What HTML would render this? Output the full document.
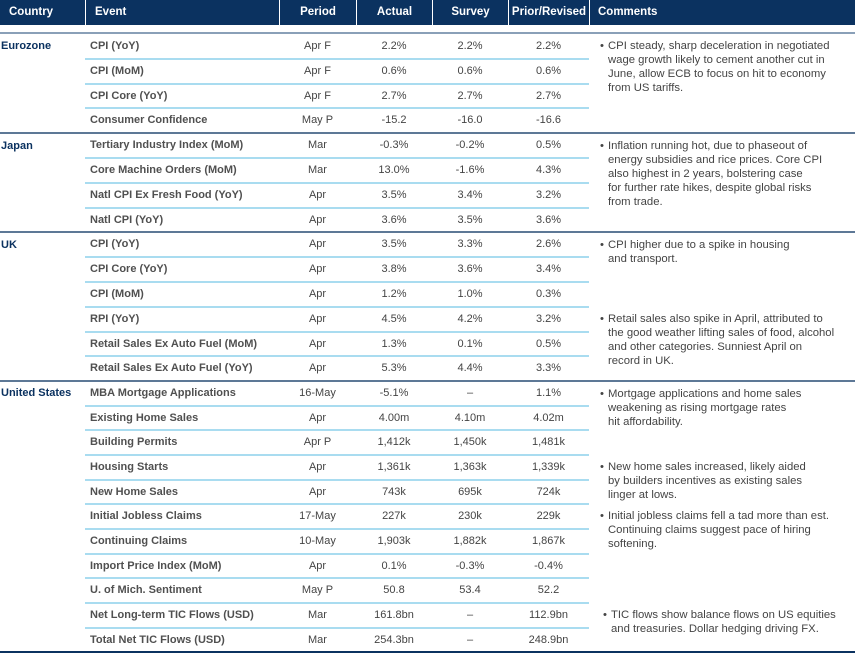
<!DOCTYPE html>
<html><head><meta charset="utf-8"><style>
*{margin:0;padding:0;box-sizing:border-box}
body{width:855px;height:653px;background:#fff;font-family:"Liberation Sans",sans-serif;position:relative;overflow:hidden;color:#444}
.hdr{position:absolute;top:0;left:0;width:855px;height:25px;background:#0b3260;color:#fff;font-weight:bold;font-size:11.5px}
.hdr div{position:absolute;top:0;height:25px;line-height:25px;border-right:1.5px solid #fff}
.row{position:absolute;left:0;width:855px;font-size:11px}
.row span{position:absolute;top:0;line-height:inherit}
.ev{left:90px;font-weight:bold;color:#505050}
.pe{left:279px;width:77px;text-align:center}
.ac{left:356px;width:76px;text-align:center}
.su{left:432px;width:76px;text-align:center}
.pr{left:508px;width:81px;text-align:center}
.ln{position:absolute;left:85px;width:504px;height:2px;background:#a9dcf0}
.gl{position:absolute;left:0;width:855px;height:2px;background:#5d7896}
.cty{position:absolute;left:1px;font-weight:bold;color:#0b3260;font-size:11px}
.cm{position:absolute;left:608px;font-size:11.3px;line-height:14px;color:#444;width:250px;white-space:nowrap}
.cm b{position:absolute;left:-8px;font-weight:normal}
</style></head><body>
<div class="hdr">
<div style="left:0;width:86px;padding-left:9px">Country</div>
<div style="left:86px;width:194px;padding-left:9px">Event</div>
<div style="left:280px;width:77px;text-align:center">Period</div>
<div style="left:357px;width:76px;text-align:center">Actual</div>
<div style="left:433px;width:76px;text-align:center">Survey</div>
<div style="left:509px;width:81px;text-align:center">Prior/Revised</div>
<div style="left:590px;width:265px;padding-left:8px;border:none">Comments</div>
</div>
<div class="gl" style="top:32px;background:#8aa0b8"></div>

<div class="row" style="top:34px;height:24.75px;line-height:24.75px"><span class="ev">CPI (YoY)</span><span class="pe">Apr F</span><span class="ac">2.2%</span><span class="su">2.2%</span><span class="pr">2.2%</span></div>
<div class="ln" style="top:57.5px"></div>
<div class="row" style="top:58.75px;height:24.75px;line-height:24.75px"><span class="ev">CPI (MoM)</span><span class="pe">Apr F</span><span class="ac">0.6%</span><span class="su">0.6%</span><span class="pr">0.6%</span></div>
<div class="ln" style="top:82.5px"></div>
<div class="row" style="top:83.5px;height:24.75px;line-height:24.75px"><span class="ev">CPI Core (YoY)</span><span class="pe">Apr F</span><span class="ac">2.7%</span><span class="su">2.7%</span><span class="pr">2.7%</span></div>
<div class="ln" style="top:107px"></div>
<div class="row" style="top:108.25px;height:24.75px;line-height:24.75px"><span class="ev">Consumer Confidence</span><span class="pe">May P</span><span class="ac">-15.2</span><span class="su">-16.0</span><span class="pr">-16.6</span></div>
<div class="gl" style="top:131.5px"></div>
<div class="cty" style="top:40px">Eurozone</div>
<div class="cm" style="top:39px"><b>•</b>CPI steady, sharp deceleration in negotiated<br>wage growth likely to cement another cut in<br>June, allow ECB to focus on hit to economy<br>from US tariffs.</div>

<div class="row" style="top:133px;height:24.75px;line-height:24.75px"><span class="ev">Tertiary Industry Index (MoM)</span><span class="pe">Mar</span><span class="ac">-0.3%</span><span class="su">-0.2%</span><span class="pr">0.5%</span></div>
<div class="ln" style="top:157px"></div>
<div class="row" style="top:158px;height:24.75px;line-height:24.75px"><span class="ev">Core Machine Orders (MoM)</span><span class="pe">Mar</span><span class="ac">13.0%</span><span class="su">-1.6%</span><span class="pr">4.3%</span></div>
<div class="ln" style="top:182px"></div>
<div class="row" style="top:183px;height:24.75px;line-height:24.75px"><span class="ev">Natl CPI Ex Fresh Food (YoY)</span><span class="pe">Apr</span><span class="ac">3.5%</span><span class="su">3.4%</span><span class="pr">3.2%</span></div>
<div class="ln" style="top:206.5px"></div>
<div class="row" style="top:207.5px;height:24.75px;line-height:24.75px"><span class="ev">Natl CPI (YoY)</span><span class="pe">Apr</span><span class="ac">3.6%</span><span class="su">3.5%</span><span class="pr">3.6%</span></div>
<div class="gl" style="top:230.5px"></div>
<div class="cty" style="top:140px">Japan</div>
<div class="cm" style="top:139px"><b>•</b>Inflation running hot, due to phaseout of<br>energy subsidies and rice prices. Core CPI<br>also highest in 2 years, bolstering case<br>for further rate hikes, despite global risks<br>from trade.</div>

<div class="row" style="top:232px;height:24.8px;line-height:24.8px"><span class="ev">CPI (YoY)</span><span class="pe">Apr</span><span class="ac">3.5%</span><span class="su">3.3%</span><span class="pr">2.6%</span></div>
<div class="ln" style="top:256px"></div>
<div class="row" style="top:257px;height:24.8px;line-height:24.8px"><span class="ev">CPI Core (YoY)</span><span class="pe">Apr</span><span class="ac">3.8%</span><span class="su">3.6%</span><span class="pr">3.4%</span></div>
<div class="ln" style="top:281px"></div>
<div class="row" style="top:282px;height:24.8px;line-height:24.8px"><span class="ev">CPI (MoM)</span><span class="pe">Apr</span><span class="ac">1.2%</span><span class="su">1.0%</span><span class="pr">0.3%</span></div>
<div class="ln" style="top:305.5px"></div>
<div class="row" style="top:306.5px;height:24.8px;line-height:24.8px"><span class="ev">RPI (YoY)</span><span class="pe">Apr</span><span class="ac">4.5%</span><span class="su">4.2%</span><span class="pr">3.2%</span></div>
<div class="ln" style="top:330.5px"></div>
<div class="row" style="top:331.5px;height:24.8px;line-height:24.8px"><span class="ev">Retail Sales Ex Auto Fuel (MoM)</span><span class="pe">Apr</span><span class="ac">1.3%</span><span class="su">0.1%</span><span class="pr">0.5%</span></div>
<div class="ln" style="top:355px"></div>
<div class="row" style="top:356px;height:24.8px;line-height:24.8px"><span class="ev">Retail Sales Ex Auto Fuel (YoY)</span><span class="pe">Apr</span><span class="ac">5.3%</span><span class="su">4.4%</span><span class="pr">3.3%</span></div>
<div class="gl" style="top:379.5px"></div>
<div class="cty" style="top:239px">UK</div>
<div class="cm" style="top:238px"><b>•</b>CPI higher due to a spike in housing<br>and transport.</div>
<div class="cm" style="top:312px"><b>•</b>Retail sales also spike in April, attributed to<br>the good weather lifting sales of food, alcohol<br>and other categories. Sunniest April on<br>record in UK.</div>

<div class="row" style="top:381px;height:24.6px;line-height:24.6px"><span class="ev">MBA Mortgage Applications</span><span class="pe">16-May</span><span class="ac">-5.1%</span><span class="su">–</span><span class="pr">1.1%</span></div>
<div class="ln" style="top:404.5px"></div>
<div class="row" style="top:405.5px;height:24.6px;line-height:24.6px"><span class="ev">Existing Home Sales</span><span class="pe">Apr</span><span class="ac">4.00m</span><span class="su">4.10m</span><span class="pr">4.02m</span></div>
<div class="ln" style="top:429px"></div>
<div class="row" style="top:430px;height:24.6px;line-height:24.6px"><span class="ev">Building Permits</span><span class="pe">Apr P</span><span class="ac">1,412k</span><span class="su">1,450k</span><span class="pr">1,481k</span></div>
<div class="ln" style="top:453.5px"></div>
<div class="row" style="top:454.5px;height:24.6px;line-height:24.6px"><span class="ev">Housing Starts</span><span class="pe">Apr</span><span class="ac">1,361k</span><span class="su">1,363k</span><span class="pr">1,339k</span></div>
<div class="ln" style="top:478.5px"></div>
<div class="row" style="top:479.5px;height:24.6px;line-height:24.6px"><span class="ev">New Home Sales</span><span class="pe">Apr</span><span class="ac">743k</span><span class="su">695k</span><span class="pr">724k</span></div>
<div class="ln" style="top:503px"></div>
<div class="row" style="top:504px;height:24.6px;line-height:24.6px"><span class="ev">Initial Jobless Claims</span><span class="pe">17-May</span><span class="ac">227k</span><span class="su">230k</span><span class="pr">229k</span></div>
<div class="ln" style="top:527.5px"></div>
<div class="row" style="top:528.5px;height:24.6px;line-height:24.6px"><span class="ev">Continuing Claims</span><span class="pe">10-May</span><span class="ac">1,903k</span><span class="su">1,882k</span><span class="pr">1,867k</span></div>
<div class="ln" style="top:552.5px"></div>
<div class="row" style="top:553.5px;height:24.6px;line-height:24.6px"><span class="ev">Import Price Index (MoM)</span><span class="pe">Apr</span><span class="ac">0.1%</span><span class="su">-0.3%</span><span class="pr">-0.4%</span></div>
<div class="ln" style="top:577px"></div>
<div class="row" style="top:578px;height:24.6px;line-height:24.6px"><span class="ev">U. of Mich. Sentiment</span><span class="pe">May P</span><span class="ac">50.8</span><span class="su">53.4</span><span class="pr">52.2</span></div>
<div class="ln" style="top:602px"></div>
<div class="row" style="top:603px;height:24.6px;line-height:24.6px"><span class="ev">Net Long-term TIC Flows (USD)</span><span class="pe">Mar</span><span class="ac">161.8bn</span><span class="su">–</span><span class="pr">112.9bn</span></div>
<div class="ln" style="top:626.5px"></div>
<div class="row" style="top:627.5px;height:24.6px;line-height:24.6px"><span class="ev">Total Net TIC Flows (USD)</span><span class="pe">Mar</span><span class="ac">254.3bn</span><span class="su">–</span><span class="pr">248.9bn</span></div>
<div class="gl" style="top:650.5px;background:#0b3260"></div>
<div class="cty" style="top:387px">United States</div>
<div class="cm" style="top:387px"><b>•</b>Mortgage applications and home sales<br>weakening as rising mortgage rates<br>hit affordability.</div>
<div class="cm" style="top:460px"><b>•</b>New home sales increased, likely aided<br>by builders incentives as existing sales<br>linger at lows.</div>
<div class="cm" style="top:509px"><b>•</b>Initial jobless claims fell a tad more than est.<br>Continuing claims suggest pace of hiring<br>softening.</div>
<div class="cm" style="top:608px;left:611px"><b>•</b>TIC flows show balance flows on US equities<br>and treasuries. Dollar hedging driving FX.</div>
</body></html>
